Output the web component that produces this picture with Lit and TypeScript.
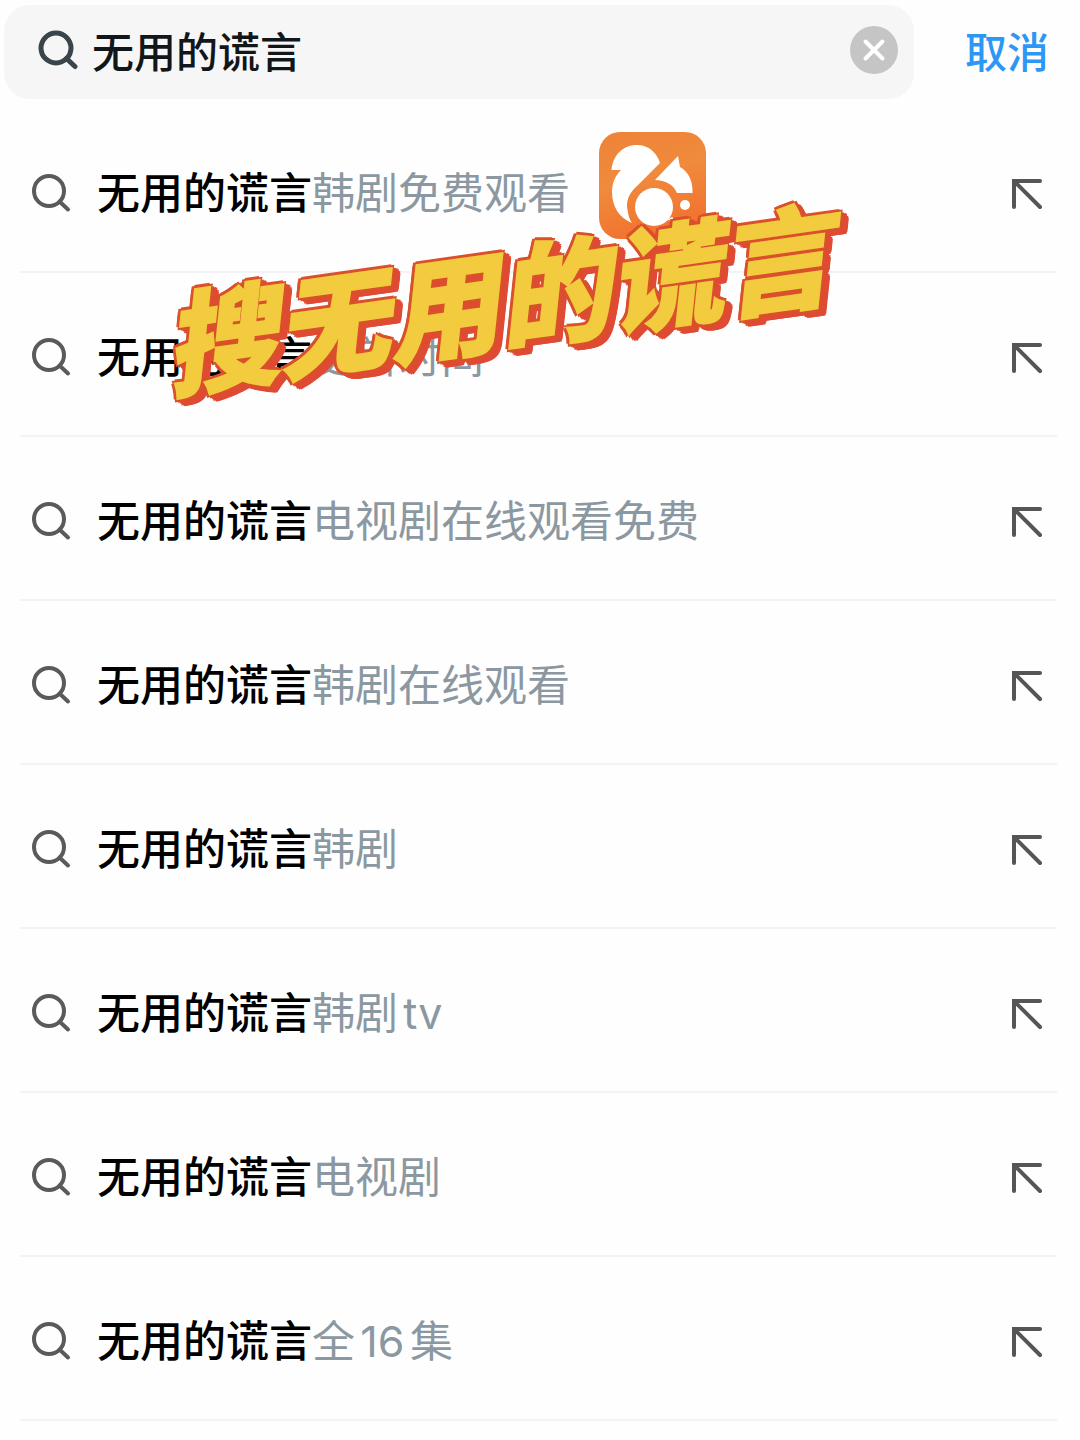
import { LitElement, html, css, svg } from "lit";
import { customElement, property, state } from "lit/decorators.js";

const magnifier = (stroke: number) => svg`
  <svg viewBox="0 0 40 40" width="40" height="40" fill="none" stroke="currentColor"
    stroke-width=${stroke} stroke-linecap="round" aria-hidden="true">
    <circle cx="18" cy="18" r="15" />
    <path d="M28.500 28.500 L37 36.500" />
  </svg>`;

@customElement("suggestion-row")
export class SuggestionRow extends LitElement {
  @property() term = "";
  @property() rest = "";

  static styles = css`
    :host {
      display: block;
      border-bottom: 2px solid #f3f3f3;
    }
    .row {
      display: flex;
      align-items: center;
      justify-content: space-between;
      padding: 52px 12px 46px 11px;
    }
    .link {
      display: flex;
      align-items: center;
      gap: 26px;
      color: #000;
      text-decoration: none;
      font-family: "Inter", "Noto Sans CJK SC", sans-serif;
      font-size: 43px;
      line-height: 64px;
    }
    .icon {
      display: flex;
      color: #5a5a5a;
    }
    .term {
      font-weight: 500;
    }
    .rest {
      font-weight: 400;
      color: #8c98a1;
      text-autospace: normal;
    }
    .fill {
      display: flex;
      padding: 0;
      border: 0;
      background: none;
      color: #555;
    }
  `;

  render() {
    return html`
      <div class="row">
        <a class="link" href="#">
          <span class="icon">${magnifier(4)}</span>
          <span><span class="term">${this.term}</span><span class="rest">${this.rest}</span></span>
        </a>
        <button class="fill" type="button" aria-label=${this.term + this.rest}>
          <svg viewBox="0 0 36 36" width="36" height="36" fill="none" stroke="currentColor"
            stroke-width="4" stroke-linecap="round" stroke-linejoin="miter" aria-hidden="true">
            <path d="M31 6 H5 V32 M5 6 L31 32" />
          </svg>
        </button>
      </div>
    `;
  }
}

@customElement("app-root")
export class AppRoot extends LitElement {
  @state() private query = "无用的谎言";

  private suggestions = [
    "韩剧免费观看",
    "更新时间",
    "电视剧在线观看免费",
    "韩剧在线观看",
    "韩剧",
    "韩剧tv",
    "电视剧",
    "全16集",
  ];

  static styles = css`
    :host {
      display: block;
      position: relative;
      overflow: hidden;
      min-height: 100vh;
      background: #fefefe;
      font-family: "Noto Sans CJK SC", sans-serif;
    }
    .bar {
      display: flex;
      align-items: center;
      padding: 5px 31px 10px 4px;
      gap: 51px;
    }
    .box {
      flex: 1;
      display: flex;
      align-items: center;
      box-sizing: border-box;
      height: 94px;
      padding: 0 16px 4px 34px;
      gap: 14px;
      border-radius: 26px;
      background: #f6f6f6;
      color: #3a454b;
    }
    .box svg {
      flex: none;
    }
    .input {
      flex: 1;
      min-width: 0;
      padding: 0;
      border: 0;
      outline: 0;
      background: none;
      color: #11161b;
      font: 500 42px/64px "Noto Sans CJK SC", sans-serif;
    }
    .clear {
      display: flex;
      padding: 0;
      border: 0;
      background: none;
    }
    .cancel {
      padding: 0 0 4px;
      border: 0;
      background: none;
      color: #2c97f5;
      font: 500 42px/64px "Noto Sans CJK SC", sans-serif;
    }
    .list {
      margin: 0;
      padding: 0 23px 0 20px;
      list-style: none;
    }
    .logo {
      position: absolute;
      left: 599px;
      top: 132px;
    }
    .sticker {
      position: absolute;
      left: 160px;
      top: 214px;
      margin: 0;
      font-size: 112px;
      line-height: 160px;
      font-weight: 900;
      font-style: italic;
      white-space: nowrap;
      color: #f2cb3e;
      -webkit-text-stroke: 2px #f2cb3e;
      text-shadow:
        4px 0 #d9502b, -4px 0 #d9502b, 0 4px #d9502b, 0 -4px #d9502b,
        3px 3px #d9502b, -3px 3px #d9502b, 3px -3px #d9502b, -3px -3px #d9502b,
        4px 1px #e04a34, 6px 1px #e04a34, 7px 2px #e04a34, 8px 4px #e04a34,
        8px 6px #e04a34, 7px 8px #e04a34, 5px 8px #e04a34, 3px 7px #e04a34,
        2px 5px #e04a34, 5px 4px #e04a34;
      transform: rotate(-8deg);
      pointer-events: none;
    }
  `;

  render() {
    return html`
      <header class="bar">
        <div class="box">
          ${magnifier(5)}
          <input class="input" type="text" aria-label="搜" .value=${this.query}
            @input=${(e: Event) => (this.query = (e.target as HTMLInputElement).value)} />
          <button class="clear" type="button" aria-label="×" @click=${() => (this.query = "")}>
            <svg viewBox="0 0 48 48" width="48" height="48" aria-hidden="true">
              <circle cx="24" cy="24" r="24" fill="#c5c5c5" />
              <path d="M15.500 15.500 L32.500 32.500 M32.500 15.500 L15.500 32.500" stroke="#fff" stroke-width="4" stroke-linecap="round" />
            </svg>
          </button>
        </div>
        <button class="cancel" type="button">取消</button>
      </header>
      <ul class="list">
        ${this.suggestions.map(
          (rest) => html`<li><suggestion-row term="无用的谎言" rest=${rest}></suggestion-row></li>`
        )}
      </ul>
      <svg class="logo" viewBox="0 0 107 107" width="107" height="107" aria-hidden="true">
        <defs>
          <linearGradient id="warm" x1="0" y1="0" x2="0.3" y2="1">
            <stop offset="0" stop-color="#ee8338" />
            <stop offset="0.5" stop-color="#f08a3c" />
            <stop offset="1" stop-color="#f2732f" />
          </linearGradient>
        </defs>
        <rect width="107" height="107" rx="21" fill="url(#warm)" />
        <path fill="#fff" d="M12.500 38 C14 23 24 13 38 13 C50 13 58 21 61 31 L38 54
          C29 62 27 70 28.500 78 C29.500 84 30.500 87 33 91
          C20 86 13 74 13 60 C13 51 16 44 22 38 Z" />
        <path fill="#fff" d="M56 48 L79 24 L81 35 C90 40 94 50 93.500 61 H78 C75 53 66 48 56 48 Z" />
        <circle cx="55" cy="75" r="19" fill="#fff" />
        <path fill="#fff" d="M68 88 L73 85 L78 89 Z" />
        <circle cx="86" cy="73" r="5" fill="#fff" />
      </svg>
      <p class="sticker">搜无用的谎言</p>
    `;
  }
}
